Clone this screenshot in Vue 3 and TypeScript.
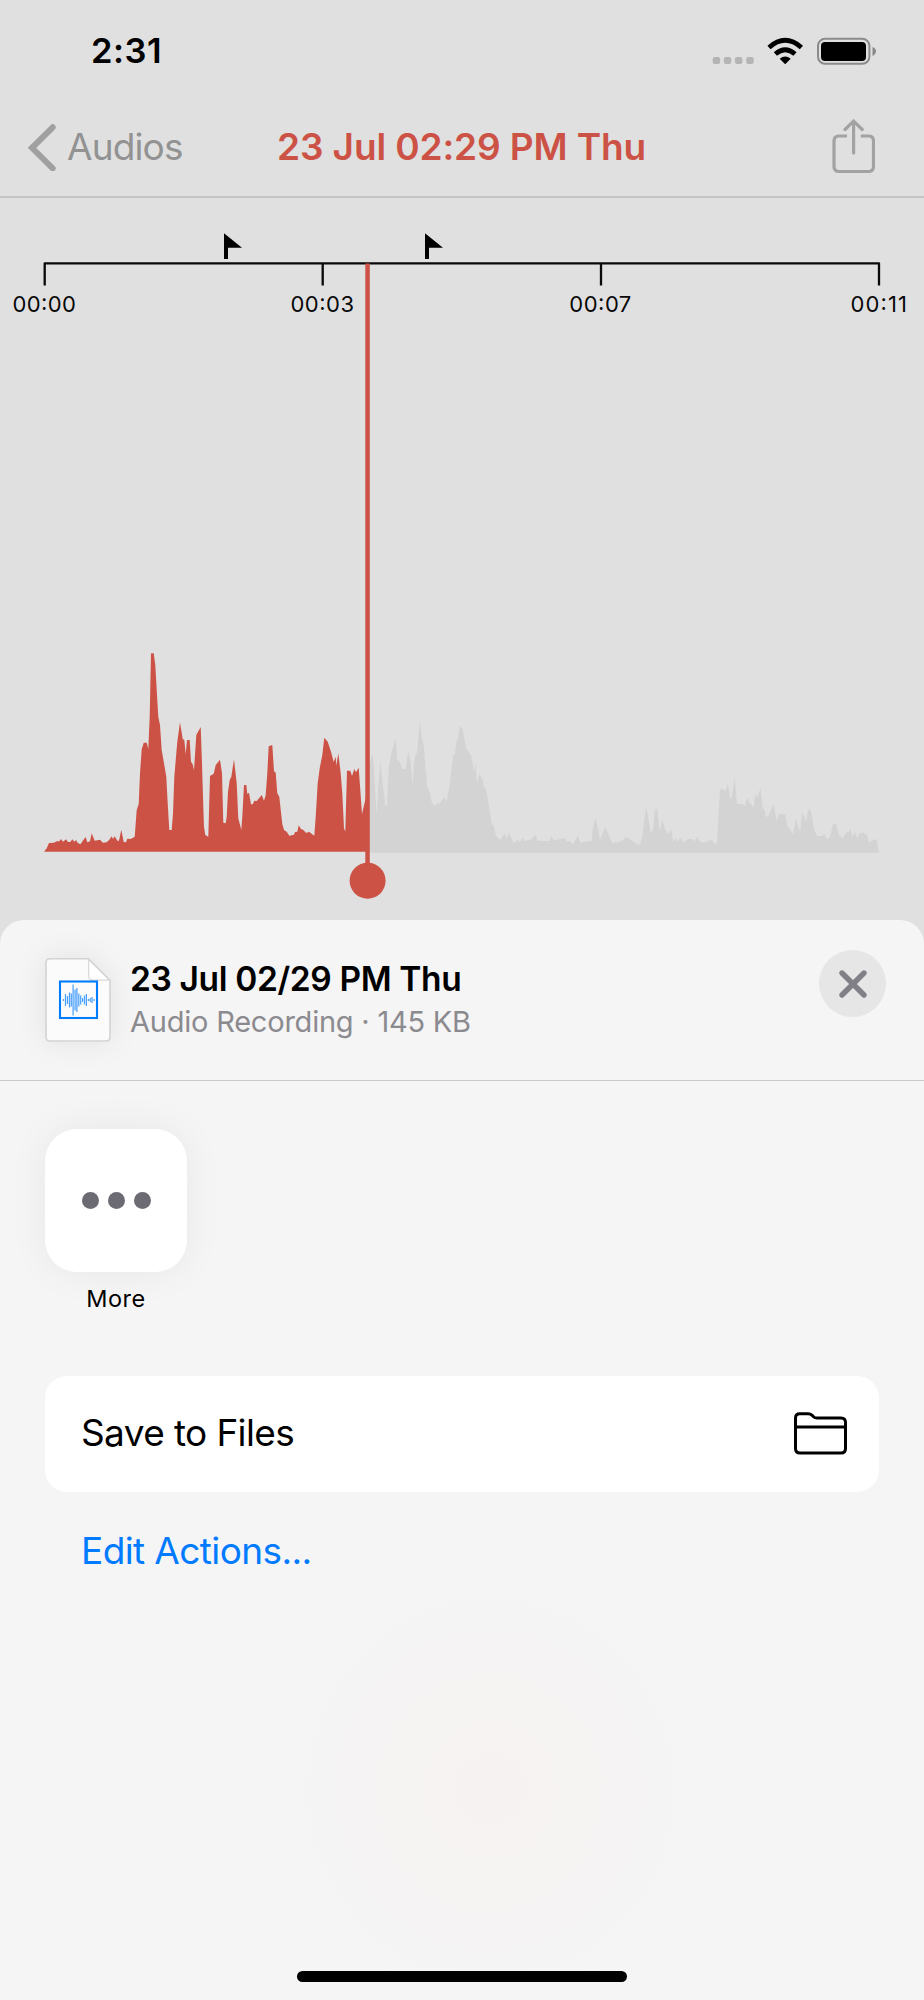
<script setup lang="ts">
interface Tick { x: number; label: string; left: number; width: number }

const ticks: Tick[] = [
  { x: 44.7, label: '00:00', left: 12.5, width: 63.5 },
  { x: 322.7, label: '00:03', left: 290.5, width: 63.5 },
  { x: 601, label: '00:07', left: 569.3, width: 62 },
  { x: 879, label: '00:11', left: 850.5, width: 56.5 },
]
const flags: number[] = [224, 425]

// Outlines are sampled in thirds of a pixel, relative to each segment's origin.
function trace(ox: number, oy: number, data: string): string {
  return data.trim().split(/\s+/).map((p) => {
    const [x, y] = p.split(',').map(Number)
    return `${(ox + x / 3).toFixed(1)},${(oy + y / 3).toFixed(1)}`
  }).join(' ')
}

const played = trace(30, 640, `42,635 50,625 57,609 72,608 80,604 88,604 93,597 99,605 108,598 114,606 121,606 127,598 133,605 138,600 144,610 152,612
160,600 167,591 172,607 180,604 185,580 194,602 210,599 219,608 230,607 238,599 245,589 249,597 254,589 262,602 267,602 274,569 281,606 288,607
292,596 302,597 314,590 320,510 326,492 330,400 335,328 341,308 350,308 355,327 359,230 363,40 371,40 376,75 382,180 385,230 390,255 395,330
403,375 409,410 413,490 418,570 425,570 429,520 433,410 442,305 450,247 458,297 463,300 467,342 471,300 479,300 483,365 488,373 492,391 499,285
512,261 516,370 520,500 522,560 526,585 535,590 540,408 551,401 557,375`) + ' ' + trace(220, 640, `0,359 6,400 10,548 17,550 20,530 24,455 29,420
34,410 42,358 50,430 55,535 64,570 67,530 72,435 79,435 82,462 87,458 93,493 98,493 103,482 110,483 125,465 132,482 137,465 142,400 146,319
157,315 162,393 167,398 172,460 178,470 187,552 192,570 200,575 208,587 222,584 225,576 232,575 236,556 243,567 250,570 259,579 267,575 283,587
287,530 293,430 299,385 307,345 313,293 323,305 333,335 341,366 347,350 349,377 355,340 362,400 367,460 372,565 376,575 381,392 391,392 396,408
403,387 408,397 416,383 421,450 426,523 430,505 436,480 443,440 443,635`)

const remaining = trace(360, 700, `24,458 24,210 30,190 38,160 44,250 50,343 55,260 61,185 68,250 76,318 81,318 86,200 95,155 107,115 112,178 120,187 128,207 137,207 145,153
152,190 158,257 162,190 166,165 171,160 179,67 186,115 192,140 196,200 202,262 210,280 215,307 224,317 230,311 240,310 253,292 260,304 270,250
279,165 285,162 289,122 294,118 299,78 308,88 318,145 333,165 342,215 346,190 351,250 358,222 368,238 372,265 377,262 385,305 396,375 401,377
407,405 414,415 422,420 434,400 440,417 447,398 461,430 473,419 479,426 488,415 495,423 510,420 527,404 532,422 568,423 575,407 580,421 605,416
615,415 620,425 630,422 638,434 654,407 661,428 685,423 695,424 698,385 707,355 715,390 720,420 736,380 750,415 757,429 775,427 787,422 795,411
810,417 830,432`) + ' ' + trace(620, 750, `60,284 67,260 78,170 85,205 92,250 100,240 104,178 112,178 117,225 121,243 127,208 135,238 145,253 154,236 159,273
167,265 173,276 181,262 190,277 207,267 217,267 222,275 230,261 242,277 260,277 267,269 270,274 275,269 285,283 291,276 300,118 310,117 315,125
324,102 330,145 335,143 344,84 348,130 351,163 365,162 375,167 382,142 388,160 393,161 401,173 405,133 411,143 422,113 428,175 434,180 437,198
444,201 450,185 461,162 470,213 477,192 496,193 502,227 520,253 528,204 534,230 541,246 546,188 553,200 558,217 563,185 568,175 575,192 581,235
590,257 607,258 612,250 621,267 630,262 638,225 648,220 657,255 668,265 680,245 686,248 690,235 698,262 704,247 713,265 719,247 723,252 729,245
735,253 741,253 747,279 765,266 771,273 775,300 777,308`)

// [x, half height] of every bar in the document glyph
const bars: number[][] = [[63.5, 1], [65.5, 6], [67.5, 4], [69.5, 7.5], [71.3, 6.5], [73.1, 15.5], [75.1, 10.5], [76.9, 12], [78.8, 6.5],
  [80.7, 4.5], [82.6, 2], [84.5, 4.5], [86.4, 6], [88.4, 1], [90.2, 2], [92, 3], [94, 1]]
</script>

<template>
  <main class="screen">
    <header class="status">
      <span class="clock">2:31</span>
      <svg class="indicators" width="166" height="32" viewBox="710 34 166 32">
        <g fill="#b4b4b4">
          <rect v-for="x in [712.7, 723.8, 734.9, 746.2]" :key="x" :x="x" y="56" width="7.5" height="7" rx="2.2" />
        </g>
        <path d="M785.2 63.3 779.7 57.7Q785.2 53.4 790.7 57.7Z" />
        <path d="M775.4 53Q785.2 44.4 795 53" fill="none" stroke="#000" stroke-width="4.8" />
        <path d="M769 46.5Q785.2 32.2 801.4 46.5" fill="none" stroke="#000" stroke-width="4.8" />
        <rect x="818" y="37.8" width="51.4" height="25" rx="7" fill="none" stroke="#8b8b8b" stroke-width="2" />
        <rect x="821" y="41" width="45" height="19" rx="4" />
        <path d="M872.5 46Q876 47.5 876 50.3T872.5 55Z" fill="#888" />
      </svg>
    </header>

    <nav class="nav">
      <svg width="28" height="48" viewBox="28 123 28 48">
        <path d="M52.7 127.3 32 147.8 52.7 168.3" fill="none" stroke="#a0a0a0" stroke-width="6" stroke-linecap="round" />
      </svg>
      <span class="back">Audios</span>
      <h1>23 Jul 02:29 PM Thu</h1>
      <svg class="share" width="44" height="56" viewBox="831 118.5 44 56">
        <g fill="none" stroke="#a2a2a2" stroke-width="3.2">
          <path d="M847 135.5H839Q834 135.5 834 140.5V166Q834 171 839 171H868.5Q873.5 171 873.5 166V140.5Q873.5 135.5 868.5 135.5H860.8" />
          <path d="M853.6 152.5V121M845 129 853.6 120.6 862.2 129" stroke-linecap="round" />
        </g>
      </svg>
    </nav>

    <svg class="chart" width="924" height="721" viewBox="0 198 924 721">
      <path v-for="x in flags" :key="x" :d="`M${x} 233.3 L${x + 18} 247.8 H${x + 4} V259 H${x} Z`" />
      <path d="M44.7 285.5V263.3H879V285.5M322.7 263V285.5M601 263V285.5" fill="none" stroke="#090909" stroke-width="2.3" stroke-linejoin="round" />
      <text v-for="t in ticks" :key="t.label" :x="t.left" y="312" :textLength="t.width">{{ t.label }}</text>
      <polygon :points="remaining" fill="#d3d3d3" />
      <polygon :points="played" fill="#cd5246" />
      <rect x="365.3" y="263.5" width="4.5" height="612" fill="#cd5246" />
      <circle cx="367.6" cy="880.7" r="18" fill="#cd5246" />
    </svg>

    <section class="sheet">
      <header class="item">
        <svg class="doc" width="68" height="88" viewBox="44 956 68 88">
          <path d="M50 958.8H88.5L110 980.2V1037Q110 1041 106 1041H50Q46 1041 46 1037V962.8Q46 958.8 50 958.8Z" fill="#fbfbfb" stroke="#d3d3d3" stroke-width="1.6" />
          <path d="M88.7 959.5V975.5Q88.7 980.2 93.4 980.2H109.5Z" fill="#fff" stroke="#d8d8d8" stroke-width="1.2" />
          <rect x="60" y="981.5" width="37" height="36.5" fill="#fbfbfb" stroke="#007dfc" stroke-width="2.1" />
          <g stroke="#4ba1fb" stroke-width="1.25">
            <line v-for="b in bars" :key="b[0]" :x1="b[0]" :x2="b[0]" :y1="1000 - b[1]" :y2="1000 + b[1]" />
          </g>
        </svg>
        <div class="meta">
          <h2>23 Jul 02/29 PM Thu</h2>
          <p>Audio Recording · 145 KB</p>
        </div>
        <button class="close" type="button" aria-label="Close">
          <svg width="30" height="30" viewBox="0 0 30 30">
            <path d="M4 4 26 26M26 4 4 26" stroke="#818086" stroke-width="5.4" stroke-linecap="round" />
          </svg>
        </button>
      </header>

      <div class="app">
        <div class="tile"><i></i><i></i><i></i></div>
        <span>More</span>
      </div>

      <div class="action">
        <span>Save to Files</span>
        <svg width="56" height="46" viewBox="792 1411 56 46">
          <path d="M795.5 1418Q795.5 1413.7 799.8 1413.7H808Q810.5 1413.7 812.2 1415.4L813.5 1416.7Q814.8 1418 817 1418H841Q845.5 1418 845.5 1422.5V1448.5Q845.5 1453 841 1453H800Q795.5 1453 795.5 1448.5ZM795.5 1427H845.5" fill="none" stroke="#000" stroke-width="3" />
        </svg>
      </div>
      <a class="edit">Edit Actions...</a>
      <div class="home"></div>
    </section>
  </main>
</template>

<style>
body { margin: 0; background: #e0e0e0; }
</style>

<style scoped>
.screen {
  width: 924px;
  height: 2000px;
  overflow: hidden;
  background: #e0e0e0;
  color: #000;
  font-family: Inter, "Liberation Sans", sans-serif;
  display: flex;
  flex-direction: column;
}
h1, h2, p { margin: 0; }
span, h1, h2, p, a { white-space: nowrap; }
svg { display: block; flex: none; }
.status {
  box-sizing: border-box;
  height: 101px;
  padding: 0 48px 0 91px;
  display: flex;
  align-items: center;
  justify-content: space-between;
}
.clock { font-size: 34.5px; font-weight: 600; letter-spacing: 0.5px; }
.nav {
  box-sizing: border-box;
  height: 97px;
  padding: 0 49px 4px 28px;
  border-bottom: 2px solid #c4c4c4;
  display: flex;
  align-items: center;
}
.back { width: 210px; padding-left: 11px; font-size: 37px; color: #929292; letter-spacing: -0.85px; }
h1 { font-size: 37px; font-weight: 600; color: #cd5246; letter-spacing: -0.12px; }
.share { margin-left: auto; }
.chart text { font-size: 22px; fill: #080808; }
.sheet {
  height: 1080px;
  margin-top: 1px;
  background: radial-gradient(ellipse 220px 230px at 490px 870px, #f6f2f1, #f5f5f5);
  border-radius: 24px 24px 0 0;
  display: flex;
  flex-direction: column;
}
.item {
  box-sizing: border-box;
  height: 161px;
  padding: 30px 38px 0 44px;
  border-bottom: 1px solid #c9c9c9;
  display: flex;
}
.doc { margin-top: 6px; filter: drop-shadow(0 0 14px rgba(0, 0, 0, 0.08)); }
.meta { margin: 7px 0 0 18px; }
h2 { font-size: 33.5px; line-height: 44px; font-weight: 600; letter-spacing: -0.36px; }
p { font-size: 29px; line-height: 42px; color: #8b8a8f; letter-spacing: -0.22px; }
.close {
  width: 67px;
  height: 67px;
  margin-left: auto;
  padding: 0;
  border: 0;
  border-radius: 50%;
  background: #e6e6e6;
  display: grid;
  place-items: center;
}
.app { width: 142px; margin: 48px 0 0 45px; display: flex; flex-direction: column; align-items: center; }
.tile {
  width: 142px;
  height: 143px;
  border-radius: 32px;
  background: #fff;
  box-shadow: 0 0 40px rgba(0, 0, 0, 0.06);
  display: flex;
  align-items: center;
  justify-content: center;
  gap: 9px;
}
.tile i { width: 17px; height: 17px; border-radius: 50%; background: #6c6b74; }
.app span { margin-top: 12px; font-size: 23.5px; line-height: 30px; letter-spacing: 0.5px; }
.action {
  box-sizing: border-box;
  height: 116px;
  margin: 62px 45px 0;
  padding: 0 31px 0 36px;
  border-radius: 22px;
  background: #fff;
  display: flex;
  align-items: center;
  justify-content: space-between;
  font-size: 37px;
  letter-spacing: -0.62px;
}
.action span { margin-bottom: 4px; }
.edit { margin: 36px 0 0 81px; font-size: 37px; line-height: 46px; color: #007aff; letter-spacing: -0.6px; }
.home { width: 330px; height: 11px; margin: auto auto 18px; border-radius: 6px; background: #000; }
</style>
